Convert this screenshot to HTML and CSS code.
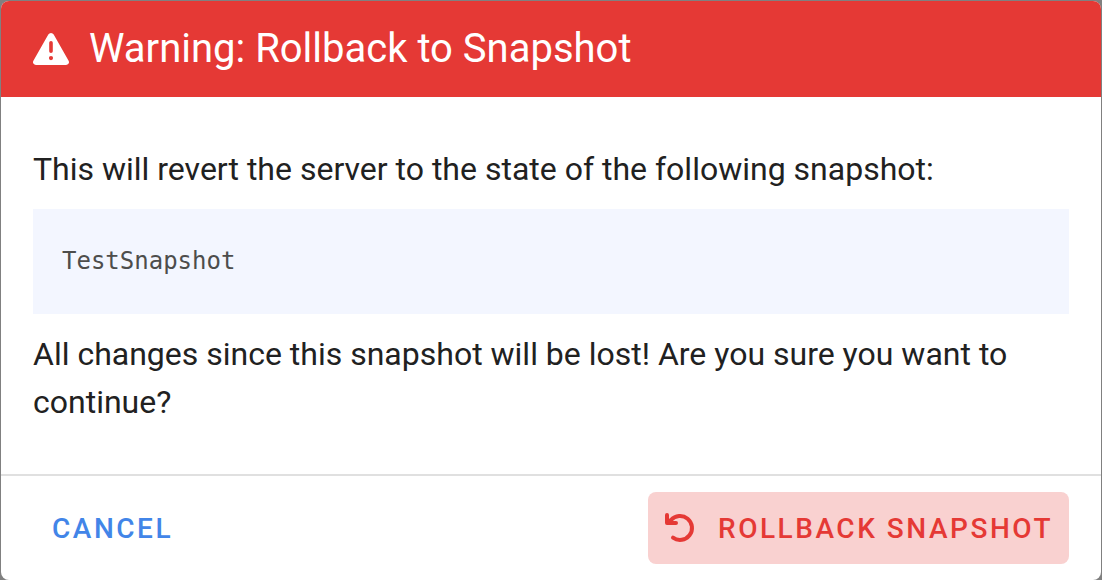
FILE: index.html
```html
<!DOCTYPE html>
<html lang="en">
<head>
<meta charset="utf-8">
<title>Rollback to Snapshot</title>
<link rel="stylesheet" href="styles.css">
</head>
<body>
<main class="dialog" role="dialog" aria-labelledby="dialog-title">
  <header class="dialog-header">
    <svg class="icon-warning" viewBox="0 0 36 32" aria-hidden="true"><path fill="currentColor" fill-rule="evenodd" d="M18 0q1.800 0 2.700 1.500L35.600 27.700q.8 1.500 0 2.900-.9 1.400-2.600 1.400H3Q1.300 32 .4 30.600q-.8-1.400 0-2.900L15.300 1.500Q16.200 0 18 0Zm0 8a1.800 1.800 0 0 0-1.800 1.800v8.400a1.800 1.800 0 0 0 3.600 0V9.800A1.800 1.800 0 0 0 18 8Zm0 15a2.100 2.100 0 1 0 0 4.200 2.100 2.100 0 0 0 0-4.200Z"/></svg>
    <h1 class="dialog-title" id="dialog-title">Warning: Rollback to Snapshot</h1>
  </header>
  <section class="dialog-body">
    <p class="message">This will revert the server to the state of the following snapshot:</p>
    <pre class="snapshot-name">TestSnapshot</pre>
    <p class="message">All changes since this snapshot will be lost! Are you sure you want to continue?</p>
  </section>
  <footer class="dialog-actions">
    <button class="button button-cancel" type="button">CANCEL</button>
    <button class="button button-danger" type="button">
      <svg class="icon-undo" viewBox="0 0 32 32" aria-hidden="true" fill="none" stroke="currentColor" stroke-width="4" stroke-linecap="round" stroke-linejoin="round"><path d="M3 3v8h9M4 10.500 7 8A12 12 0 1 1 9 25.700"/><path d="M3 5.500V11h6Z" fill="currentColor" stroke-width="1"/></svg>
      <span>ROLLBACK SNAPSHOT</span>
    </button>
  </footer>
</main>
</body>
</html>
```

FILE: styles.css
```css
* { box-sizing: border-box; }

body {
  margin: 0;
  min-height: 100vh;
  display: flex;
  background: #808080;
  font-family: Roboto, "Liberation Sans", sans-serif;
  color: #212121;
}

.dialog {
  flex: 1;
  display: flex;
  flex-direction: column;
  margin: 1px 1px 0;
  background: #fff;
  border-radius: 8px;
  overflow: hidden;
}

.dialog-header {
  display: flex;
  align-items: center;
  gap: 20px;
  padding: 24px 32px;
  background: #e53935;
  color: #fff;
}

.icon-warning { width: 36px; height: 32px; }

.dialog-title {
  margin: 0;
  font-size: 40px;
  font-weight: 400;
  line-height: 48px;
}

.dialog-body {
  flex: 1;
  padding: 48px 32px;
}

.message {
  margin: 0;
  font-size: 32px;
  line-height: 48px;
}

.snapshot-name {
  margin: 16px 0;
  padding: 32px 29px;
  background: #f3f6ff;
  color: #4d4d4c;
  font-family: "DejaVu Sans Mono", monospace;
  font-size: 24px;
  line-height: 41px;
}

.dialog-actions {
  display: flex;
  align-items: center;
  justify-content: space-between;
  padding: 16px 32px;
  border-top: 2px solid #e0e0e0;
}

.button {
  display: flex;
  align-items: center;
  height: 72px;
  border: 0;
  border-radius: 8px;
  font-family: inherit;
  font-size: 28px;
  font-weight: 500;
  letter-spacing: 0.09em;
}

.button-cancel {
  padding: 0 19px;
  background: transparent;
  color: #4285e8;
}

.button-danger {
  gap: 22px;
  padding: 0 16px;
  background: #f9d1d0;
  color: #e53935;
}

.icon-undo { width: 32px; height: 32px; }
```
